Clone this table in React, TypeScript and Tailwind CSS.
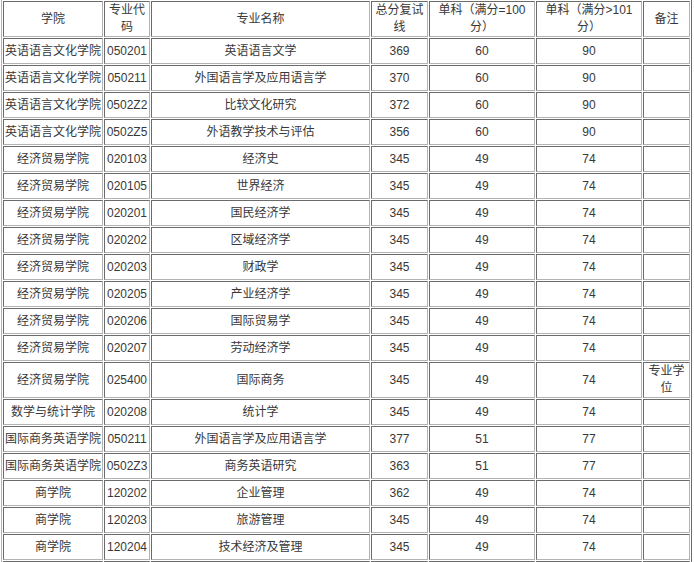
import React from "react";

type Row = {
  school: string;
  code: string;
  major: string;
  total: string;
  single100: string;
  single101: string;
  note?: string;
};

const rows: Row[] = [
  { school: "英语语言文化学院", code: "050201", major: "英语语言文学", total: "369", single100: "60", single101: "90" },
  { school: "英语语言文化学院", code: "050211", major: "外国语言学及应用语言学", total: "370", single100: "60", single101: "90" },
  { school: "英语语言文化学院", code: "0502Z2", major: "比较文化研究", total: "372", single100: "60", single101: "90" },
  { school: "英语语言文化学院", code: "0502Z5", major: "外语教学技术与评估", total: "356", single100: "60", single101: "90" },
  { school: "经济贸易学院", code: "020103", major: "经济史", total: "345", single100: "49", single101: "74" },
  { school: "经济贸易学院", code: "020105", major: "世界经济", total: "345", single100: "49", single101: "74" },
  { school: "经济贸易学院", code: "020201", major: "国民经济学", total: "345", single100: "49", single101: "74" },
  { school: "经济贸易学院", code: "020202", major: "区域经济学", total: "345", single100: "49", single101: "74" },
  { school: "经济贸易学院", code: "020203", major: "财政学", total: "345", single100: "49", single101: "74" },
  { school: "经济贸易学院", code: "020205", major: "产业经济学", total: "345", single100: "49", single101: "74" },
  { school: "经济贸易学院", code: "020206", major: "国际贸易学", total: "345", single100: "49", single101: "74" },
  { school: "经济贸易学院", code: "020207", major: "劳动经济学", total: "345", single100: "49", single101: "74" },
  { school: "经济贸易学院", code: "025400", major: "国际商务", total: "345", single100: "49", single101: "74", note: "专业学位" },
  { school: "数学与统计学院", code: "020208", major: "统计学", total: "345", single100: "49", single101: "74" },
  { school: "国际商务英语学院", code: "050211", major: "外国语言学及应用语言学", total: "377", single100: "51", single101: "77" },
  { school: "国际商务英语学院", code: "0502Z3", major: "商务英语研究", total: "363", single100: "51", single101: "77" },
  { school: "商学院", code: "120202", major: "企业管理", total: "362", single100: "49", single101: "74" },
  { school: "商学院", code: "120203", major: "旅游管理", total: "345", single100: "49", single101: "74" },
  { school: "商学院", code: "120204", major: "技术经济及管理", total: "345", single100: "49", single101: "74" },
];

// inset cell border: dark top/left, light bottom/right
const cell =
  "border border-t-[#6b6b6b] border-l-[#6b6b6b] border-r-[#b3b3b3] border-b-[#b3b3b3] px-[1px] py-0 text-center align-middle font-normal";

export default function App() {
  return (
    <div className="bg-white min-h-screen">
      <table
        className="table-fixed border-separate border-spacing-[1px] w-[691px] ml-[1px] -mt-[1px] border border-t-[#b3b3b3] border-l-[#b3b3b3] border-r-[#6b6b6b] border-b-[#6b6b6b] text-[12px] leading-[17px] text-[#383838]"
        style={{ fontFamily: '"Liberation Sans", "Noto Sans CJK SC", sans-serif' }}
      >
        <thead>
          <tr className="h-[36px]">
            <td className={`${cell} w-[100px]`}>学院</td>
            <td className={`${cell} w-[46px]`}>专业代码</td>
            <td className={`${cell} w-[219px]`}>专业名称</td>
            <td className={`${cell} w-[57px]`}>总分复试线</td>
            <td className={`${cell} w-[106px]`}>单科（满分=100分）</td>
            <td className={`${cell} w-[106px]`}>单科（满分&gt;101分）</td>
            <td className={`${cell} w-[47px]`}>备注</td>
          </tr>
        </thead>
        <tbody>
          {rows.map((r, i) => (
            <tr key={i} className={r.note ? "h-[36px]" : "h-[26px]"}>
              <td className={`${cell} whitespace-nowrap`}>{r.school}</td>
              <td className={cell}>{r.code}</td>
              <td className={cell}>{r.major}</td>
              <td className={cell}>{r.total}</td>
              <td className={cell}>{r.single100}</td>
              <td className={cell}>{r.single101}</td>
              <td className={cell}>{r.note ?? ""}</td>
            </tr>
          ))}
          {/* next row continues below the fold; only its top edge shows */}
          <tr className="h-[26px]">
            <td className={cell}></td>
            <td className={cell}></td>
            <td className={cell}></td>
            <td className={cell}></td>
            <td className={cell}></td>
            <td className={cell}></td>
            <td className={cell}></td>
          </tr>
        </tbody>
      </table>
    </div>
  );
}
